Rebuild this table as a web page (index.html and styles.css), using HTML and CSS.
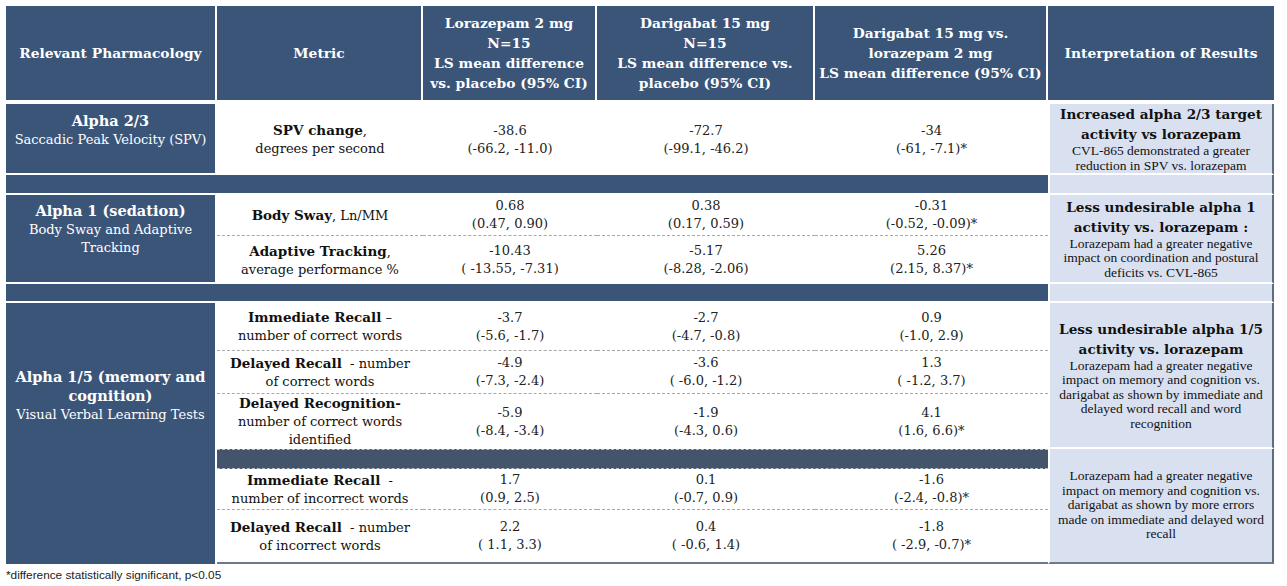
FILE: index.html
```html
<!DOCTYPE html>
<html>
<head>
<meta charset="utf-8">
<link rel="stylesheet" href="styles.css">
</head>
<body>
<table class="grid">
  <colgroup>
    <col class="c1"><col class="c2"><col class="c3"><col class="c4"><col class="c5"><col class="c6">
  </colgroup>
  <tr class="r-head">
    <th class="h">Relevant Pharmacology</th>
    <th class="h">Metric</th>
    <th class="h">Lorazepam 2 mg<br>N=15<br>LS mean difference<br>vs. placebo (95% CI)</th>
    <th class="h">Darigabat 15 mg<br>N=15<br>LS mean difference vs.<br>placebo (95% CI)</th>
    <th class="h">Darigabat 15 mg vs.<br>lorazepam 2 mg<br>LS mean difference (95% CI)</th>
    <th class="h last">Interpretation of Results</th>
  </tr>
  <tr class="r1">
    <td class="pharm p-a23"><b class="ph-t">Alpha 2/3</b><br>Saccadic Peak Velocity (SPV)</td>
    <td class="m"><b>SPV change</b>,<br>degrees per second</td>
    <td class="v">-38.6<br>(-66.2, -11.0)</td>
    <td class="v">-72.7<br>(-99.1, -46.2)</td>
    <td class="v">-34<br>(-61, -7.1)*</td>
    <td class="interp"><b class="ih">Increased alpha 2/3 target activity vs lorazepam</b><span class="ib">CVL-865 demonstrated a greater reduction in SPV vs. lorazepam</span></td>
  </tr>
  <tr class="r-sep1">
    <td class="sep" colspan="5"></td>
    <td class="interp"></td>
  </tr>
  <tr class="r2a">
    <td class="pharm p-a1" rowspan="2"><b class="ph-t">Alpha 1 (sedation)</b><br>Body Sway and Adaptive<br>Tracking</td>
    <td class="m dash"><b>Body Sway</b>, Ln/MM</td>
    <td class="v dash">0.68<br>(0.47, 0.90)</td>
    <td class="v dash">0.38<br>(0.17, 0.59)</td>
    <td class="v dash">-0.31<br>(-0.52, -0.09)*</td>
    <td class="interp" rowspan="2"><b class="ih">Less undesirable alpha 1 activity vs. lorazepam :</b><span class="ib">Lorazepam had a greater negative impact on coordination and postural deficits vs. CVL-865</span></td>
  </tr>
  <tr class="r2b">
    <td class="m"><b>Adaptive Tracking</b>,<br>average performance %</td>
    <td class="v">-10.43<br>( -13.55, -7.31)</td>
    <td class="v">-5.17<br>(-8.28, -2.06)</td>
    <td class="v">5.26<br>(2.15, 8.37)*</td>
  </tr>
  <tr class="r-sep2">
    <td class="sep" colspan="5"></td>
    <td class="interp"></td>
  </tr>
  <tr class="r3a">
    <td class="pharm p-a15 last-pharm" rowspan="6"><b class="ph-t">Alpha 1/5 (memory and<br>cognition)</b><br>Visual Verbal Learning Tests</td>
    <td class="m dash"><b>Immediate Recall</b> –<br>number of correct words</td>
    <td class="v dash">-3.7<br>(-5.6, -1.7)</td>
    <td class="v dash">-2.7<br>(-4.7, -0.8)</td>
    <td class="v dash">0.9<br>(-1.0, 2.9)</td>
    <td class="interp" rowspan="3"><b class="ih">Less undesirable alpha 1/5 activity vs. lorazepam</b><span class="ib">Lorazepam had a greater negative impact on memory and cognition vs. darigabat as shown by immediate and delayed word recall and word recognition</span></td>
  </tr>
  <tr class="r3b">
    <td class="m dash"><b>Delayed Recall</b>&nbsp; - number<br>of correct words</td>
    <td class="v dash">-4.9<br>(-7.3, -2.4)</td>
    <td class="v dash">-3.6<br>( -6.0, -1.2)</td>
    <td class="v dash">1.3<br>( -1.2, 3.7)</td>
  </tr>
  <tr class="r3c">
    <td class="m"><b>Delayed Recognition-</b><br>number of correct words<br>identified</td>
    <td class="v">-5.9<br>(-8.4, -3.4)</td>
    <td class="v">-1.9<br>(-4.3, 0.6)</td>
    <td class="v">4.1<br>(1.6, 6.6)*</td>
  </tr>
  <tr class="r3d">
    <td class="band" colspan="4"></td>
    <td class="interp bottom" rowspan="3"><span class="ib">Lorazepam had a greater negative impact on memory and cognition vs. darigabat as shown by more errors made on immediate and delayed word recall</span></td>
  </tr>
  <tr class="r3e">
    <td class="m dash"><b>Immediate Recall</b>&nbsp; -<br>number of incorrect words</td>
    <td class="v dash">1.7<br>(0.9, 2.5)</td>
    <td class="v dash">0.1<br>(-0.7, 0.9)</td>
    <td class="v dash">-1.6<br>(-2.4, -0.8)*</td>
  </tr>
  <tr class="r3f">
    <td class="m bottom"><b>Delayed Recall</b>&nbsp; - number<br>of incorrect words</td>
    <td class="v bottom">2.2<br>( 1.1, 3.3)</td>
    <td class="v bottom">0.4<br>( -0.6, 1.4)</td>
    <td class="v bottom">-1.8<br>( -2.9, -0.7)*</td>
  </tr>
</table>
<p class="foot">*difference statistically significant, p&lt;0.05</p>
</body>
</html>
```
FILE: styles.css
```css
html, body {
  background: #ffffff;
}
body {
  margin: 0;
  padding: 6px 0 0 6px;
  font-family: "DejaVu Serif", Georgia, serif;
  color: #111;
}
.grid {
  border-collapse: separate;
  border-spacing: 0;
  table-layout: fixed;
  width: 1268px;
}
.c1 { width: 211px; }
.c2 { width: 206px; }
.c3 { width: 174px; }
.c4 { width: 218px; }
.c5 { width: 233px; }
.c6 { width: 226px; }

th, td {
  padding: 0 3px;
  text-align: center;
  vertical-align: middle;
  box-sizing: border-box;
}

.h {
  background: #3b5579;
  color: #fff;
  font-weight: bold;
  font-size: 13.8px;
  line-height: 20px;
  padding: 0 2px;
  border-right: 2px solid #fff;
  border-bottom: 4px solid #fff;
}
.h.last { border-right: 0; }

.r-head { height: 98px; }
.r1 { height: 70px; }
.r-sep1 { height: 20px; }
.r2a { height: 41px; }
.r2b { height: 48px; }
.r-sep2 { height: 19px; }
.r3a { height: 48px; }
.r3b { height: 43px; }
.r3c { height: 55px; }
.r3d { height: 20px; }
.r3e { height: 41px; }
.r3f { height: 54px; }

.pharm {
  background: #3b5579;
  color: #fff;
  font-size: 13px;
  line-height: 18px;
  border-right: 2px solid #fff;
  border-bottom: 2px solid #fff;
  padding: 0 8px;
}
.p-a23 { padding-bottom: 16px; }
.p-a1 { padding-bottom: 18px; }
.p-a15 { padding: 0 8px 76px; }
.pharm.last-pharm { border-bottom: 0; }
.ph-t { font-size: 14.5px; }

.m {
  font-size: 13px;
  line-height: 18px;
  padding: 0 8px;
  color: #111;
}
.m b { font-size: 13.5px; }
.v {
  font-size: 13px;
  line-height: 18px;
  color: #222;
}
.dash { border-bottom: 1px dashed #a8a8a8; }
.bottom { border-bottom: 2px solid #6d7a8c; }

.sep {
  background: #3b5579;
  border-bottom: 2px solid #fff;
}
.band {
  background: #44546a;
  border-top: 1px dashed #b8c0cc;
  border-bottom: 1px dashed #b8c0cc;
}

.interp {
  background: #d9e1f1;
  border-bottom: 2px solid #fff;
  border-right: 2px solid #5e6c80;
  border-left: 2px solid #fff;
  padding: 0 4px;
  color: #111;
}
.interp.bottom { border-bottom: 2px solid #6d7a8c; }
.ih {
  display: block;
  font-size: 13.6px;
  line-height: 20px;
}
.ib {
  display: block;
  font-family: "Liberation Serif", "Times New Roman", serif;
  font-size: 13.5px;
  line-height: 14.5px;
}

.foot {
  margin: 4px 0 0 0;
  font-family: "Liberation Sans", Arial, sans-serif;
  font-size: 11.8px;
  line-height: 15px;
  color: #222;
}
```
